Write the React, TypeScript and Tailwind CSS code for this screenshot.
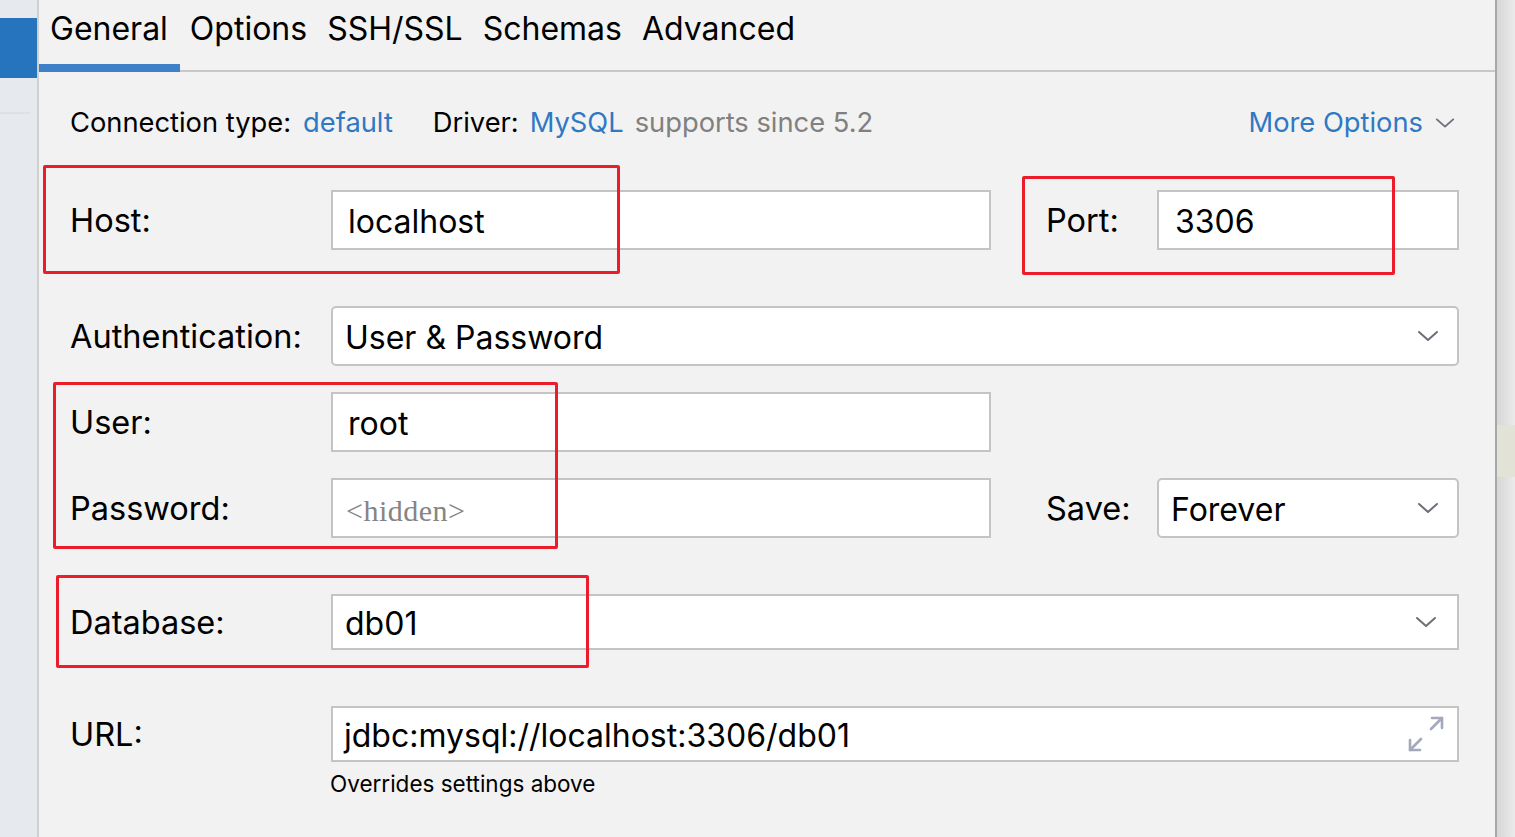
import React from "react";

const Chevron = ({ className = "" }: { className?: string }) => (
  <svg width="22" height="14" viewBox="0 0 22 14" className={className}>
    <path d="M2 3 L11 11 L20 3" fill="none" stroke="#6e6e78" strokeWidth="2" strokeLinecap="round" strokeLinejoin="round" />
  </svg>
);

const ExpandIcon = () => (
  <svg width="38" height="38" viewBox="0 0 38 38">
    <g fill="none" stroke="#a3a9bb" strokeWidth="2.6" strokeLinecap="round" strokeLinejoin="round">
      <path d="M24 14 L35 3" />
      <path d="M25 3 L35 3 L35 13" />
      <path d="M14 24 L3 35" />
      <path d="M3 25 L3 35 L13 35" />
    </g>
  </svg>
);

const Label = ({ children }: { children: React.ReactNode }) => (
  <div className="w-[261px] shrink-0 pt-[3px] text-[32.5px] text-black leading-none">{children}</div>
);

export default function App() {
  return (
    <div
      className="flex w-[1515px] h-[837px] overflow-hidden bg-[#f2f2f2]"
      style={{ fontFamily: "Inter, 'Noto Sans', sans-serif" }}
    >
      {/* left strip */}
      <div className="w-[37px] shrink-0 bg-[#e6e9ed] flex flex-col">
        <div className="h-[18px]" />
        <div className="h-[60px] bg-[#2673be]" />
        <div className="h-[34px]" />
        <div className="h-[2px] bg-[#dde0e4] w-[30px]" />
      </div>
      <div className="w-[2px] shrink-0 bg-[#d0d0d0]" />

      {/* main panel */}
      <div className="relative flex-1 flex flex-col bg-[#f2f2f2]">
        {/* tabs */}
        <div className="h-[72px] border-b-2 border-[#c8c8c8] flex items-end">
          {["General", "Options", "SSH/SSL", "Schemas", "Advanced"].map((t, i) => (
            <div
              key={t}
              className={
                "relative h-full flex items-start pt-[12px] text-[32px] text-black leading-none " +
                (i === 0 ? "pl-[11px] pr-[12px]" : "px-[10px]")
              }
            >
              <span className="pt-[1px]">{t}</span>
              {i === 0 && <div className="absolute left-0 right-0 bottom-[-2px] h-[8px] bg-[#3f80c8]" />}
            </div>
          ))}
        </div>

        {/* connection row */}
        <div className="h-[100px] flex items-center pt-[2px] pl-[31px] pr-[40px] text-[27.3px] leading-none">
          <span className="text-black">Connection type:</span>
          <span className="ml-[12px] text-[#2f78c4]">default</span>
          <span className="ml-[40px] text-black">Driver:</span>
          <span className="ml-[11px] text-[#2f78c4]">MySQL</span>
          <span className="ml-[11px] text-[#808080]">supports since 5.2</span>
          <span className="ml-auto text-[#2f78c4]">More Options</span>
          <Chevron className="ml-[12px] w-[20px]" />
        </div>

        <div className="pl-[31px] pr-[36px] flex flex-col">
          {/* Host / Port */}
          <div className="mt-[18px] h-[60px] flex items-center">
            <Label>Host:</Label>
            <div className="w-[660px] h-[60px] bg-white border-2 border-[#c4c4c4] flex items-center pl-[15px] pt-[3px] text-[32px] leading-none">
              localhost
            </div>
            <div className="w-[55px]" />
            <div className="w-[111px] pt-[3px] text-[32.5px] leading-none">Port:</div>
            <div className="flex-1 h-[60px] bg-white border-2 border-[#c4c4c4] flex items-center pl-[16px] pt-[3px] text-[32px] leading-none">
              3306
            </div>
          </div>

          {/* Authentication */}
          <div className="mt-[56px] h-[60px] flex items-center">
            <Label>Authentication:</Label>
            <div className="flex-1 h-[60px] bg-white border-2 border-[#c4c4c4] rounded-[5px] flex items-center pl-[12px] pr-[18px] text-[32px] leading-none">
              <span className="flex-1 pt-[3px]">User &amp; Password</span>
              <Chevron />
            </div>
          </div>

          {/* User */}
          <div className="mt-[26px] h-[60px] flex items-center">
            <Label>User:</Label>
            <div className="w-[660px] h-[60px] bg-white border-2 border-[#c4c4c4] flex items-center pl-[15px] pt-[3px] text-[32px] leading-none">
              root
            </div>
          </div>

          {/* Password / Save */}
          <div className="mt-[26px] h-[60px] flex items-center">
            <Label>Password:</Label>
            <div
              className="w-[660px] h-[60px] bg-white border-2 border-[#c4c4c4] flex items-center pl-[13px] pt-[6px] text-[30px] tracking-[0.5px] leading-none text-[#858585]"
              style={{ fontFamily: "'Liberation Serif', 'DejaVu Serif', serif" }}
            >
              &lt;hidden&gt;
            </div>
            <div className="w-[55px]" />
            <div className="w-[111px] pt-[3px] text-[32.5px] leading-none">Save:</div>
            <div className="flex-1 h-[60px] bg-white border-2 border-[#c4c4c4] rounded-[5px] flex items-center pl-[12px] pr-[18px] text-[32px] leading-none">
              <span className="flex-1 pt-[3px]">Forever</span>
              <Chevron />
            </div>
          </div>

          {/* Database */}
          <div className="mt-[56px] h-[56px] flex items-center">
            <Label>Database:</Label>
            <div className="flex-1 h-[56px] bg-white border-2 border-[#c4c4c4] flex items-center pl-[12px] pr-[20px] text-[32px] leading-none">
              <span className="flex-1 pt-[3px]">db01</span>
              <Chevron />
            </div>
          </div>

          {/* URL */}
          <div className="mt-[56px] h-[56px] flex items-center">
            <Label>URL:</Label>
            <div className="flex-1 h-[56px] bg-white border-2 border-[#c4c4c4] flex items-center pl-[11px] pr-[12px] text-[32px] leading-none">
              <span className="flex-1 pt-[3px]">jdbc:mysql://localhost:3306/db01</span>
              <ExpandIcon />
            </div>
          </div>
          <div className="mt-[11px] pl-[260px] text-[22.5px] leading-none text-black">Overrides settings above</div>
        </div>

        {/* red annotation boxes */}
        <div className="absolute left-[4px] top-[165px] w-[577px] h-[109px] border-[3px] border-[#ec1c2a] rounded-[2px]" />
        <div className="absolute left-[983px] top-[176px] w-[373px] h-[99px] border-[3px] border-[#ec1c2a] rounded-[2px]" />
        <div className="absolute left-[14px] top-[382px] w-[505px] h-[167px] border-[3px] border-[#ec1c2a] rounded-[2px]" />
        <div className="absolute left-[17px] top-[575px] w-[533px] h-[93px] border-[3px] border-[#ec1c2a] rounded-[2px]" />
      </div>

      {/* right strip */}
      <div className="w-[2px] shrink-0 bg-[#a8a8a8]" />
      <div className="w-[18px] shrink-0 flex flex-col bg-gradient-to-r from-[#d6d6d6] to-[#ebebeb]">
        <div className="h-[425px]" />
        <div className="h-[52px] bg-[#e3e2d6]" />
      </div>
    </div>
  );
}
